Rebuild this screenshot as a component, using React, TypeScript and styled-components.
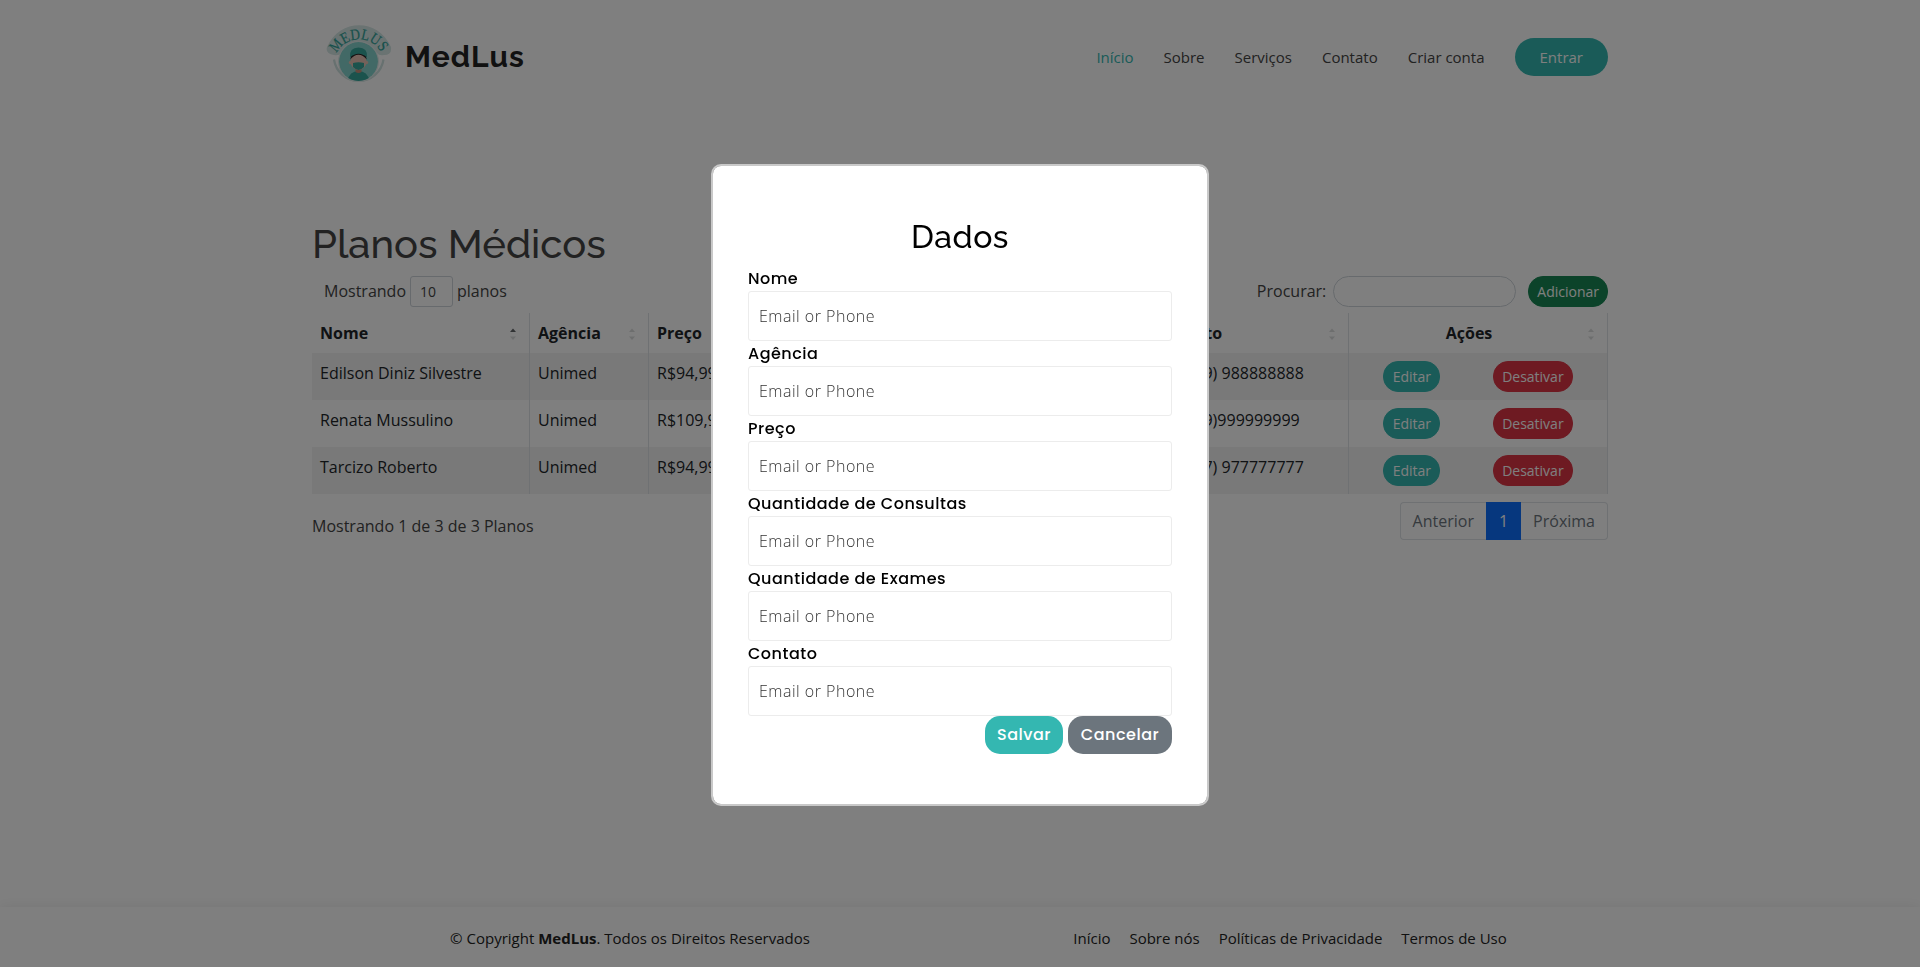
import React from 'react';
import styled, { createGlobalStyle } from 'styled-components';

const teal = '#34b7b1';
const heading = `'Raleway', Lato, sans-serif`;
const rounded = `'Poppins', Inter, sans-serif`;

const GlobalStyle = createGlobalStyle`
  *, *::before, *::after { box-sizing: border-box; }
  body {
    margin: 0;
    background: #fff;
    color: #444;
    font: 400 16px/24px 'Open Sans', sans-serif;
    overflow: hidden;
  }
  a { color: inherit; text-decoration: none; }
`;

const Page = styled.div`
  display: flex;
  flex-direction: column;
  height: 967px;
`;

const Container = styled.div`
  width: 1320px;
  margin: 0 auto;
  padding: 0 12px;
`;

const HeaderBar = styled(Container)`
  display: flex;
  align-items: center;
  justify-content: space-between;
  height: 114px;
`;

const Brand = styled.a`
  display: flex;
  align-items: center;
  gap: 13px;
  padding-left: 14px;
`;

const BrandMark = styled.svg`
  display: block;
  width: 66px;
  height: 62px;
  margin-bottom: 2px;
`;

const BrandName = styled.span`
  color: #222;
  font: 700 30px/36px ${heading};
  letter-spacing: 1px;
`;

const Nav = styled.nav`
  display: flex;
  align-items: center;
  gap: 30px;
  font-size: 15px;
`;

const NavLink = styled.a<{ $active?: boolean }>`
  color: ${(p) => (p.$active ? teal : '#444')};
`;

const LoginButton = styled.a`
  padding: 7px 25px;
  border-radius: 19px;
  background: ${teal};
  color: #fff;
`;

const Main = styled(Container)`
  flex: 1;
  padding-top: 106px;
`;

const Title = styled.h1`
  margin: 0 0 8px;
  font: 500 40px/48px ${heading};
`;

const Toolbar = styled.div`
  display: flex;
  align-items: center;
  justify-content: space-between;
  height: 31px;
  margin-bottom: 6px;
  padding-left: 12px;
`;

const ToolGroup = styled.div`
  display: flex;
  align-items: center;
  line-height: 22px;
`;

const ToolText = styled.span`
  padding-bottom: 2px;
`;

const PageSize = styled.div`
  width: 43px;
  height: 31px;
  margin: 0 4px;
  padding: 3px 9px;
  border: 1px solid #ced4da;
  border-radius: 3px;
  font-size: 14px;
  line-height: 23px;
`;

const SearchInput = styled.input`
  width: 183px;
  height: 31px;
  margin: 0 12px 0 7px;
  padding: 4px 8px;
  border: 1px solid #ced4da;
  border-radius: 16px;
  background: #fff;
`;

const PillButton = styled.button<{ $color: string }>`
  min-width: 57px;
  height: 31px;
  padding: 4px 8px;
  border: 1px solid ${(p) => p.$color};
  border-radius: 15px;
  background: ${(p) => p.$color};
  color: #fff;
  font: 400 14px/21px 'Open Sans', sans-serif;
`;

const Table = styled.table`
  width: 100%;
  table-layout: fixed;
  border-collapse: separate;
  border-spacing: 0;
  color: #212529;
`;

const HeadCell = styled.th<{ $center?: boolean }>`
  position: relative;
  height: 40px;
  padding: 8px 26px 8px 8px;
  border-right: 1px solid #dee2e6;
  text-align: ${(p) => (p.$center ? 'center' : 'left')};
  font-weight: 700;
  white-space: nowrap;
`;

const SortMark = styled.svg`
  position: absolute;
  right: 12px;
  top: 14px;
  width: 8px;
  height: 14px;
`;

const Row = styled.tr`
  &:nth-child(odd) { background: #f2f2f2; }
`;

const Cell = styled.td`
  height: 47px;
  padding: 8px;
  border-right: 1px solid #dee2e6;
  vertical-align: top;
  white-space: nowrap;
`;

const Actions = styled.div`
  display: flex;
  justify-content: space-around;
`;

const TableFooter = styled.div`
  display: flex;
  justify-content: space-between;
  padding-top: 8px;
`;

const Info = styled.div`
  padding-top: 12px;
`;

const Pagination = styled.div`
  display: flex;
  height: 38px;
`;

const PageLink = styled.a<{ $active?: boolean }>`
  padding: 6px 12px;
  border: 1px solid ${(p) => (p.$active ? '#0d6efd' : '#dee2e6')};
  background: ${(p) => (p.$active ? '#0d6efd' : '#fff')};
  color: ${(p) => (p.$active ? '#fff' : '#6c757d')};
  &:first-child { border-right: 0; border-radius: 4px 0 0 4px; }
  &:last-child { border-left: 0; border-radius: 0 4px 4px 0; }
`;

const Footer = styled.footer`
  height: 60px;
  background: #fff;
  box-shadow: 0 2px 15px rgba(0, 0, 0, 0.1);
  font-size: 15px;
`;

const FooterRow = styled(Container)`
  display: grid;
  grid-template-columns: 1fr 1fr;
  gap: 24px;
  align-items: center;
  height: 60px;
  padding-top: 1px;
`;

const Copyright = styled.div`
  text-align: center;
  color: #222;
`;

const FooterLinks = styled.nav`
  display: flex;
  justify-content: center;
  gap: 19px;
  color: #222;
`;

const Backdrop = styled.div`
  position: fixed;
  inset: 0;
  background: rgba(0, 0, 0, 0.5);
`;

const Dialog = styled.form`
  position: fixed;
  left: 711px;
  top: 164px;
  width: 498px;
  height: 642px;
  padding: 50px 35px;
  border: 2px solid #c9c9c9;
  border-radius: 10px;
  background: #fff;
  background-clip: padding-box;
  color: #080710;
  font: 500 16px/25px ${rounded};
  letter-spacing: 0.5px;
`;

const DialogTitle = styled.h2`
  margin: 0;
  height: 50px;
  text-align: center;
  color: #000;
  font: 500 32px/41px ${heading};
  letter-spacing: 0.5px;
`;

const FieldLabel = styled.label`
  display: block;
  height: 75px;
  color: #000;
  white-space: nowrap;
`;

const FieldInput = styled.input`
  display: block;
  width: 100%;
  height: 50px;
  padding: 0 10px;
  border: 1px solid #ececec;
  border-radius: 3px;
  background: #fff;
  font: 300 16px 'Open Sans', sans-serif;
  letter-spacing: 0.5px;
  &::placeholder { color: #333; opacity: 1; }
`;

const DialogActions = styled.div`
  display: flex;
  justify-content: flex-end;
  gap: 5px;
`;

const DialogButton = styled.button<{ $color: string; $width: number }>`
  width: ${(p) => p.$width}px;
  height: 38px;
  padding: 0;
  border: 0;
  border-radius: 15px;
  background: ${(p) => p.$color};
  color: #fff;
  font: 500 16px/36px ${rounded};
  letter-spacing: 0.5px;
`;

const Logo = () => (
  <BrandMark viewBox="0 0 66 62">
    <defs>
      <path id="arc" d="M10.500 28.500 A 25 25 0 0 1 55.500 28.500" />
      <clipPath id="disc"><circle cx="32.5" cy="36.5" r="19.5" /></clipPath>
    </defs>
    <path d="M1 22 C8 7 20 .3 33 .3 S58 7 65 22 Q66 30 58 30 Q53 31 51 28 C47 21 41 16.500 33 16.500 S19 21 15 28 Q13 31 8 30 Q-1 29 1 22Z" fill="#d4e6e4" />
    <path d="M8 34.500 A25 25 0 0 0 57.500 34.500" fill="none" stroke="#cfe2e0" strokeWidth="2.200" />
    <circle cx="32.500" cy="36.500" r="20.500" fill="#dfebea" />
    <g clipPath="url(#disc)">
      <circle cx="32.500" cy="36.500" r="19.500" fill="#84d3cc" />
      <path d="M21 62 Q21 46 32.500 46 T44 62Z" fill="#36a69b" />
      <path d="M29.500 42h6v5q-3 2-6 0Z" fill="#c98f7b" />
      <ellipse cx="32.500" cy="36.500" rx="8" ry="8.500" fill="#e9c3b4" />
      <circle cx="24.500" cy="37.500" r="1.700" fill="#e9c3b4" />
      <circle cx="40.500" cy="37.500" r="1.700" fill="#e9c3b4" />
      <path d="M24.200 34.500 Q25 27 32.500 27 T40.800 34.500 Q37 29.800 32.500 29.800 T24.200 34.500Z" fill="#2d2424" />
      <path d="M24 32.500 Q23 22.500 32.500 22.500 T41 32.500 Q37 28.800 32.500 28.800 T24 32.500Z" fill="#36a69b" />
      <path d="M27 38 Q32.500 36.500 38 38 V42 Q35 45 32.500 45 T27 42Z" fill="#36a69b" />
    </g>
    <text fill="#2fa197" stroke="#2fa197" strokeWidth="0.2" fontFamily="'Liberation Serif', serif" fontSize="15.5">
      <textPath href="#arc" textLength="54.5" lengthAdjust="spacingAndGlyphs">MEDLUS</textPath>
    </text>
  </BrandMark>
);

const columns = [
  { name: 'Nome', width: 218 },
  { name: 'Agência', width: 119 },
  { name: 'Preço', width: 92 },
  { name: 'Consultas', width: 210 },
  { name: 'Exames', width: 199 },
  { name: 'Contato', width: 199 },
  { name: 'Ações', width: 259 },
];

const plans = [
  ['Edilson Diniz Silvestre', 'Unimed', 'R$94,99', '10', '10', '55 (019) 988888888'],
  ['Renata Mussulino', 'Unimed', 'R$109,99', '10', '10', '55 (019)999999999'],
  ['Tarcizo Roberto', 'Unimed', 'R$94,99', '10', '10', '55 (017) 977777777'],
];

const fields = ['Nome', 'Agência', 'Preço', 'Quantidade de Consultas', 'Quantidade de Exames', 'Contato'];

export default function App() {
  return (
    <>
      <GlobalStyle />
      <Page>
        <HeaderBar as="header">
          <Brand href="#">
            <Logo />
            <BrandName>MedLus</BrandName>
          </Brand>
          <Nav>
            <NavLink href="#" $active>Início</NavLink>
            <NavLink href="#">Sobre</NavLink>
            <NavLink href="#">Serviços</NavLink>
            <NavLink href="#">Contato</NavLink>
            <NavLink href="#">Criar conta</NavLink>
            <LoginButton href="#">Entrar</LoginButton>
          </Nav>
        </HeaderBar>

        <Main as="main">
          <Title>Planos Médicos</Title>
          <Toolbar>
            <ToolGroup>
              <ToolText>Mostrando</ToolText>
              <PageSize>10</PageSize>
              <ToolText>planos</ToolText>
            </ToolGroup>
            <ToolGroup>
              <ToolText>Procurar:</ToolText>
              <SearchInput />
              <PillButton $color="#198754">Adicionar</PillButton>
            </ToolGroup>
          </Toolbar>
          <Table>
            <colgroup>
              {columns.map((c) => <col key={c.name} width={c.width} />)}
            </colgroup>
            <thead>
              <tr>
                {columns.map((c, i) => (
                  <HeadCell key={c.name} $center={c.name === 'Ações'}>
                    {c.name}
                    <SortMark viewBox="0 0 8 14">
                      <path d="M1 5 4 1.500 7 5Z" fill="#212529" opacity={i === 0 ? 0.7 : 0.16} />
                      <path d="M1 9.500 4 13 7 9.500Z" fill="#212529" opacity={0.16} />
                    </SortMark>
                  </HeadCell>
                ))}
              </tr>
            </thead>
            <tbody>
              {plans.map((plan) => (
                <Row key={plan[0]}>
                  {plan.map((value, i) => <Cell key={i}>{value}</Cell>)}
                  <Cell>
                    <Actions>
                      <PillButton $color={teal}>Editar</PillButton>
                      <PillButton $color="#dc3545">Desativar</PillButton>
                    </Actions>
                  </Cell>
                </Row>
              ))}
            </tbody>
          </Table>
          <TableFooter>
            <Info>Mostrando 1 de 3 de 3 Planos</Info>
            <Pagination>
              <PageLink>Anterior</PageLink>
              <PageLink $active>1</PageLink>
              <PageLink>Próxima</PageLink>
            </Pagination>
          </TableFooter>
        </Main>

        <Footer>
          <FooterRow>
            <Copyright>
              © Copyright <strong>MedLus</strong>. Todos os Direitos Reservados
            </Copyright>
            <FooterLinks>
              <a href="#">Início</a>
              <a href="#">Sobre nós</a>
              <a href="#">Políticas de Privacidade</a>
              <a href="#">Termos de Uso</a>
            </FooterLinks>
          </FooterRow>
        </Footer>
      </Page>

      <Backdrop />
      <Dialog>
        <DialogTitle>Dados</DialogTitle>
        {fields.map((name) => (
          <FieldLabel key={name}>
            {name}
            <FieldInput placeholder="Email or Phone" />
          </FieldLabel>
        ))}
        <DialogActions>
          <DialogButton type="button" $color={teal} $width={78}>Salvar</DialogButton>
          <DialogButton type="button" $color="#6c757d" $width={104}>Cancelar</DialogButton>
        </DialogActions>
      </Dialog>
    </>
  );
}
